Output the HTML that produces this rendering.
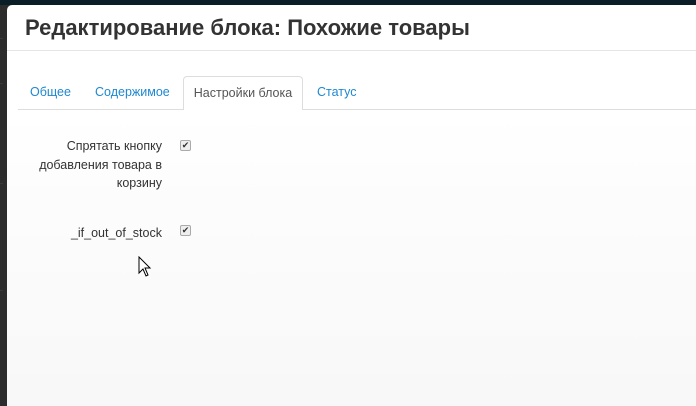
<!DOCTYPE html>
<html><head><meta charset="utf-8"><style>
body{margin:0;width:696px;height:406px;overflow:hidden;background:#2a2a2a;font-family:"Liberation Sans","DejaVu Sans",sans-serif;position:relative}
.top{position:absolute;left:0;top:0;width:696px;height:5px;background:#0b1d26}
.strip{position:absolute;left:0;top:5px;width:7px;height:401px;background:#2c2c2c;color:#555;font-size:13px;overflow:hidden}
.strip div{position:absolute;left:-4px;border-bottom:1px solid #3a3a3a;width:7px}
.modal{position:absolute;left:7px;top:5px;width:689px;height:401px;background:linear-gradient(#fff 0,#fff 110px,#fcfcfc 200px,#f8f8f8 401px);border-top-left-radius:5px}
h1{position:absolute;left:18px;top:10px;margin:0;font-size:22px;font-weight:bold;color:#333}
.hb{position:absolute;left:0;top:45px;width:689px;height:1px;background:#e5e5e5}
.tabs{position:absolute;left:11px;top:104px;width:678px;height:1px;background:#ddd}
.tab{position:absolute;top:80px;font-size:12.5px;color:#1e88d0}
.active{position:absolute;left:176px;top:71px;height:34px;background:#fff;border:1px solid #ddd;border-bottom:none;border-radius:4px 4px 0 0;font-size:12.5px;color:#555;text-align:center;line-height:33px;box-sizing:border-box;width:120px}
.lab{position:absolute;right:534px;font-size:12.5px;color:#333;text-align:right;line-height:18.5px}
.cb{position:absolute;left:173px;width:9px;height:9px;border:1px solid #aaa;border-radius:2px;background:#eee;font-size:9px;line-height:9px;text-align:center;color:#333}
</style></head><body>
<div class="top"></div>
<div class="strip"><div style="top:33px;height:0"></div><div style="top:78px"></div><div style="top:178px"></div><div style="top:285px"></div></div>
<div class="modal">
<h1>Редактирование блока: Похожие товары</h1>
<div class="hb"></div>
<div class="tabs"></div>
<div class="tab" style="left:23px">Общее</div>
<div class="tab" style="left:88px">Содержимое</div>
<div class="active">Настройки блока</div>
<div class="tab" style="left:310px">Статус</div>
<div class="lab" style="top:132px;width:125px">Спрятать кнопку<br>добавления товара в<br>корзину</div>
<div class="cb" style="top:135px">✔</div>
<div class="lab" style="top:219px">_if_out_of_stock</div>
<div class="cb" style="top:220px">✔</div>
<svg style="position:absolute;left:131px;top:251px" width="14" height="22" viewBox="0 0 14 22"><path d="M1 1 L1 17 L5 13 L8 20 L10 19 L7 12 L12 12 Z" fill="#fff" stroke="#000" stroke-width="1"/></svg>
</div>
</body></html>
